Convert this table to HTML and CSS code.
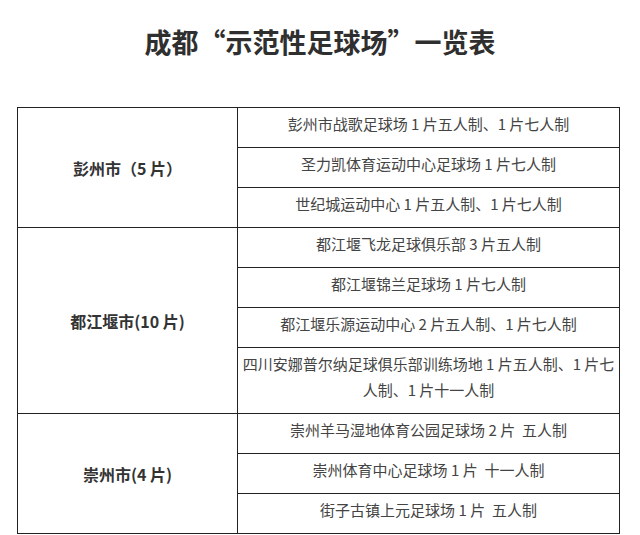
FILE: index.html
```html
<!DOCTYPE html>
<html lang="zh-CN">
<head>
<meta charset="utf-8">
<title>成都“示范性足球场”一览表</title>
<link rel="stylesheet" href="styles.css">
</head>
<body>
<h1 class="title">成都“示范性足球场”一览表</h1>
<table class="fields">
  <colgroup><col class="col-city"><col class="col-site"></colgroup>
  <tbody>
    <tr><td class="city" rowspan="3">彭州市（5 片）</td><td>彭州市战歌足球场 1 片五人制、1 片七人制</td></tr>
    <tr><td>圣力凯体育运动中心足球场 1 片七人制</td></tr>
    <tr><td>世纪城运动中心 1 片五人制、1 片七人制</td></tr>
    <tr><td class="city" rowspan="4">都江堰市(10 片)</td><td>都江堰飞龙足球俱乐部 3 片五人制</td></tr>
    <tr><td>都江堰锦兰足球场 1 片七人制</td></tr>
    <tr><td>都江堰乐源运动中心 2 片五人制、1 片七人制</td></tr>
    <tr><td class="tight">四川安娜普尔纳足球俱乐部训练场地 1 片五人制、1 片七人制、1 片十一人制</td></tr>
    <tr><td class="city" rowspan="3">崇州市(4 片)</td><td>崇州羊马湿地体育公园足球场 2 片&nbsp; 五人制</td></tr>
    <tr><td>崇州体育中心足球场 1 片&nbsp; 十一人制</td></tr>
    <tr><td>街子古镇上元足球场 1 片&nbsp; 五人制</td></tr>
  </tbody>
</table>
</body>
</html>
```
FILE: styles.css
```css
html, body {
  margin: 0;
  padding: 0;
  background: #ffffff;
}
body {
  font-family: "Noto Sans CJK SC", "Noto Sans", sans-serif;
  color: #3a3a3a;
}
.title {
  margin: 24px 0 0;
  font-size: 27px;
  line-height: 36px;
  font-weight: bold;
  text-align: center;
  color: #2f2f2f;
}
.fields {
  margin: 47px 0 0 17px;
  width: 603px;
  border-collapse: collapse;
  table-layout: fixed;
}
.col-city { width: 220px; }
.fields td {
  border: 1px solid #222;
  padding: 3px 6px 10px;
  font-size: 15px;
  line-height: 26px;
  text-align: center;
  vertical-align: top;
  color: #444;
}
.fields td.tight {
  padding-left: 2px;
  padding-right: 2px;
}
.fields td.city {
  vertical-align: middle;
  font-size: 16px;
  font-weight: bold;
  color: #333;
  padding: 0 6px;
}
```
